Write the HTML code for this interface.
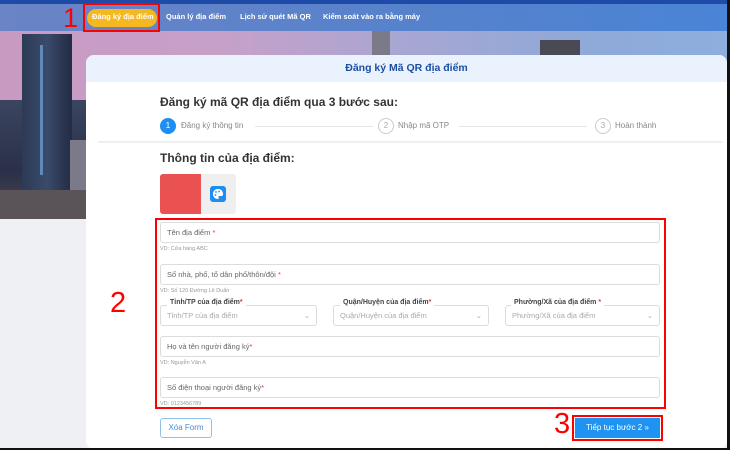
<!DOCTYPE html>
<html><head><meta charset="utf-8"><style>
*{margin:0;padding:0;box-sizing:border-box}
body{width:730px;height:450px;overflow:hidden;position:relative;background:#eef0f4;font-family:"Liberation Sans","Noto Sans CJK SC",sans-serif}
.abs{position:absolute}
.bg{left:0;top:0;width:730px;height:219px;background:linear-gradient(90deg,#c89ac2 0%,#c7a0c8 30%,#a8a6d2 55%,#8fa9d8 80%,#8eaede 100%)}
.nav{left:0;top:4px;width:730px;height:27px;background:linear-gradient(90deg,#6a84c6,#5582cc 60%,#4a84d6)}
.topline{left:0;top:0;width:730px;height:4px;background:#1e4ba8}
.navi{top:12px;color:#fff;font-size:7.5px;font-weight:bold}
.card{left:86px;top:55px;width:641px;height:394px;background:#fff;border-radius:8px;overflow:hidden}
.head{left:0;top:0;width:641px;height:27px;background:#eaf2fd;text-align:center;color:#1b4fa0;font-size:10.5px;line-height:27px;font-weight:bold}
.inp{border:1px solid #dcdcdc;border-radius:3px;background:#fff;height:21px;font-size:7.5px;color:#666;padding-left:6px;line-height:19px}
.inp b{color:#e33;font-weight:normal}
.hint{font-size:5.5px;color:#999}
.lab{font-size:7px;color:#444;font-weight:bold;background:#fff;padding:0 3px}
.circ{width:16px;height:16px;border-radius:50%;border:1px solid #ccc;color:#aaa;font-size:8px;text-align:center;line-height:14px}
.st{font-size:8px;color:#888}
.ln{height:1px;background:#e6e6e6}
.rb{border:2px solid #f00}
</style></head><body>
<div class="abs bg"></div>
<div class="abs" style="left:0;top:100px;width:88px;height:119px;background:linear-gradient(180deg,#3b4560,#2a3048 60%,#504a50)"></div>
<div class="abs" style="left:22px;top:34px;width:50px;height:160px;background:linear-gradient(90deg,#2c3a56,#3a4a6a 50%,#222c44)"></div>
<div class="abs" style="left:40px;top:45px;width:3px;height:130px;background:#6fa8d8;opacity:.7"></div>
<div class="abs" style="left:70px;top:140px;width:16px;height:60px;background:#7a7a8a"></div>
<div class="abs" style="left:0;top:190px;width:88px;height:29px;background:#5a5458"></div>
<div class="abs" style="left:372px;top:30px;width:18px;height:25px;background:#7a7a88"></div>
<div class="abs" style="left:540px;top:40px;width:40px;height:15px;background:#4a4a55"></div>
<div class="abs topline"></div>
<div class="abs nav"></div>
<div class="abs" style="left:87px;top:9px;width:70px;height:18px;border-radius:9px;background:#f6b820"></div>
<div class="abs navi" style="left:92px">Đăng ký địa điểm</div>
<div class="abs navi" style="left:166px">Quản lý địa điểm</div>
<div class="abs navi" style="left:240px">Lịch sử quét Mã QR</div>
<div class="abs navi" style="left:323px">Kiểm soát vào ra bằng máy</div>
<div class="abs rb" style="left:83px;top:3px;width:77px;height:29px"></div>
<div class="abs" style="left:63px;top:4px;color:#f00;font-size:27px;line-height:28px">1</div>

<div class="abs card">
 <div class="abs head">Đăng ký Mã QR địa điểm</div>
</div>
<div class="abs" style="left:160px;top:95px;font-size:12px;font-weight:bold;color:#333">Đăng ký mã QR địa điểm qua 3 bước sau:</div>
<div class="abs circ" style="left:160px;top:118px;background:#1e8ff0;border-color:#1e8ff0;color:#fff">1</div>
<div class="abs st" style="left:181px;top:121px">Đăng ký thông tin</div>
<div class="abs ln" style="left:255px;top:126px;width:118px"></div>
<div class="abs circ" style="left:378px;top:118px">2</div>
<div class="abs st" style="left:398px;top:121px">Nhập mã OTP</div>
<div class="abs ln" style="left:459px;top:126px;width:128px"></div>
<div class="abs circ" style="left:595px;top:118px">3</div>
<div class="abs st" style="left:615px;top:121px">Hoàn thành</div>
<div class="abs ln" style="left:98px;top:141px;width:625px;background:#f0f0f0;height:2px"></div>
<div class="abs" style="left:160px;top:151px;font-size:12px;font-weight:bold;color:#333">Thông tin của địa điểm:</div>
<div class="abs" style="left:160px;top:174px;width:76px;height:40px;background:#efefef;border-radius:3px"></div>
<div class="abs" style="left:160px;top:174px;width:41px;height:40px;background:#ea5252;border-radius:3px 0 0 3px"></div>
<div class="abs" style="left:210px;top:186px;width:16px;height:16px;background:#1e8ff0;border-radius:3px"></div>
<svg class="abs" style="left:210px;top:186px" width="16" height="16" viewBox="0 0 16 16"><path d="M8 3C5 3 3 5 3 8s2 5 5 5c1 0 1-1 .5-1.5S8.5 10 10 10h1.5C13 10 13 8.5 13 8c0-3-2-5-5-5z" fill="#fff"/><circle cx="6" cy="6" r=".9" fill="#1e8ff0"/><circle cx="9" cy="5.5" r=".9" fill="#1e8ff0"/><circle cx="5.5" cy="9" r=".9" fill="#1e8ff0"/></svg>

<div class="abs inp" style="left:160px;top:222px;width:500px">Tên địa điểm <b>*</b></div>
<div class="abs hint" style="left:160px;top:246px">VD: Cửa hàng ABC</div>
<div class="abs inp" style="left:160px;top:264px;width:500px">Số nhà, phố, tổ dân phố/thôn/đội <b>*</b></div>
<div class="abs hint" style="left:160px;top:288px">VD: Số 120 Đường Lê Duẩn</div>
<div class="abs inp" style="left:160px;top:305px;width:157px;color:#aaa">Tỉnh/TP của địa điểm<span style="position:absolute;right:6px;top:0">⌄</span></div>
<div class="abs inp" style="left:333px;top:305px;width:156px;color:#aaa">Quận/Huyện của địa điểm<span style="position:absolute;right:6px;top:0">⌄</span></div>
<div class="abs inp" style="left:505px;top:305px;width:155px;color:#aaa">Phường/Xã của địa điểm<span style="position:absolute;right:6px;top:0">⌄</span></div>
<div class="abs lab" style="left:167px;top:299px">Tỉnh/TP của địa điểm<span style="color:#e33">*</span></div>
<div class="abs lab" style="left:340px;top:299px">Quận/Huyện của địa điểm<span style="color:#e33">*</span></div>
<div class="abs lab" style="left:511px;top:299px">Phường/Xã của địa điểm<span style="color:#e33"> *</span></div>
<div class="abs inp" style="left:160px;top:336px;width:500px">Họ và tên người đăng ký<b>*</b></div>
<div class="abs hint" style="left:160px;top:360px">VD: Nguyễn Văn A</div>
<div class="abs inp" style="left:160px;top:377px;width:500px">Số điện thoại người đăng ký<b>*</b></div>
<div class="abs hint" style="left:160px;top:401px">VD: 0123456789</div>
<div class="abs rb" style="left:155px;top:218px;width:511px;height:191px"></div>
<div class="abs" style="left:110px;top:287px;color:#f00;font-size:29px">2</div>

<div class="abs" style="left:160px;top:418px;width:52px;height:20px;border:1px solid #8ec2ea;border-radius:3px;color:#4a8ad0;font-size:8px;text-align:center;line-height:18px">Xóa Form</div>
<div class="abs" style="left:575px;top:418px;width:85px;height:20px;background:#1e93f2;color:#fff;font-size:8px;text-align:center;line-height:20px">Tiếp tục bước 2 »</div>
<div class="abs rb" style="left:572px;top:415px;width:91px;height:26px"></div>
<div class="abs" style="left:554px;top:408px;color:#f00;font-size:29px">3</div>
<div class="abs" style="left:727px;top:0;width:3px;height:450px;background:#111"></div>
<div class="abs" style="left:0;top:448px;width:730px;height:2px;background:#111"></div>
</body></html>
